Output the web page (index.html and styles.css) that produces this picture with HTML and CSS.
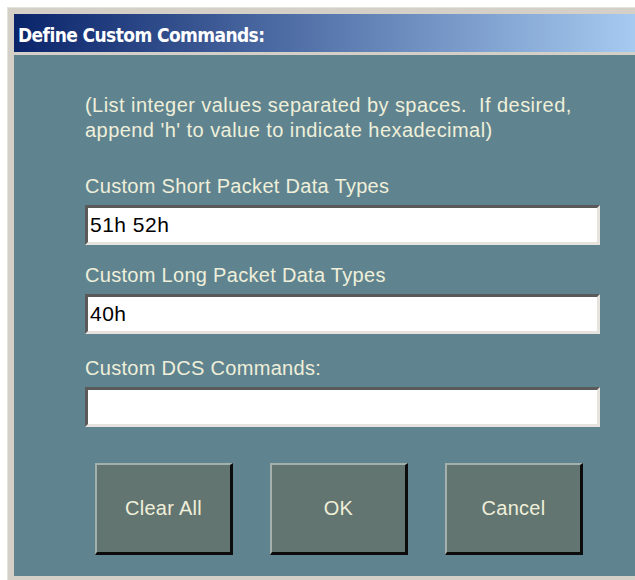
FILE: index.html
```html
<!DOCTYPE html>
<html>
<head>
<meta charset="utf-8">
<link rel="stylesheet" href="styles.css">
</head>
<body>
<div class="window">
  <div class="titlebar">Define Custom Commands:</div>
  <div class="sep"></div>
  <div class="content">
    <p class="hint">(List integer values separated by spaces.&nbsp; If desired,<br>append 'h' to value to indicate hexadecimal)</p>
    <label class="field-label">Custom Short Packet Data Types</label>
    <div class="field field-short"><span class="field-value">51h 52h</span></div>
    <label class="field-label">Custom Long Packet Data Types</label>
    <div class="field field-long"><span class="field-value">40h</span></div>
    <label class="field-label">Custom DCS Commands:</label>
    <div class="field field-dcs"><span class="field-value"></span></div>
    <div class="buttons">
      <div class="btn">Clear All</div>
      <div class="btn">OK</div>
      <div class="btn">Cancel</div>
    </div>
  </div>
</div>
</body>
</html>
```

FILE: styles.css
```css
html, body {
  margin: 0;
  padding: 0;
  background: #ffffff;
  width: 635px;
  height: 580px;
  overflow: hidden;
}

.window {
  margin: 7px 0 0 7px;
  height: 573px;
  box-sizing: border-box;
  background: #d4d0c8;
  border-left: 1px solid #e4e2dc;
  border-top: 1px solid #e4e2dc;
  padding: 6px 0 4px 6px;
  display: flex;
  flex-direction: column;
}

.titlebar {
  height: 32px;
  padding-top: 6px;
  flex: none;
  background: linear-gradient(to right, #0a246a, #a6caf0);
  color: #ffffff;
  font-family: "DejaVu Sans Condensed", "DejaVu Sans", sans-serif;
  font-weight: bold;
  font-size: 19px;
  letter-spacing: -0.6px;
  line-height: 31px;
  padding-left: 4px;
  white-space: nowrap;
}

.sep {
  height: 3px;
  flex: none;
  background: #d4d0c8;
}

.content {
  flex: 1;
  background: #5f848f;
  padding: 38px 0 0 71px;
  font-family: "Liberation Sans", Arial, sans-serif;
  font-size: 20px;
  letter-spacing: 0.3px;
  color: #efefda;
}

.hint {
  margin: 0 0 31px 0;
  line-height: 25px;
  letter-spacing: 0.45px;
  white-space: nowrap;
}

.field-label {
  display: block;
  line-height: 25px;
  margin-bottom: 6px;
}

.field {
  width: 515px;
  height: 40px;
  box-sizing: border-box;
  background: #ffffff;
  border-top: 3px solid #5a5a5a;
  border-left: 3px solid #5a5a5a;
  border-right: 3px solid #e6e3de;
  border-bottom: 3px solid #e6e3de;
  display: flex;
  align-items: center;
}

.field-short {
  margin-bottom: 18px;
}

.field-long {
  margin-bottom: 22px;
}

.field-value {
  color: #000000;
  font-size: 21px;
  letter-spacing: 0.5px;
  padding-left: 2px;
}

.buttons {
  display: flex;
  gap: 37px;
  margin: 36px 0 0 10px;
}

.btn {
  width: 138px;
  height: 92px;
  box-sizing: border-box;
  background: #637570;
  border-top: 2px solid #a3b0ac;
  border-left: 2px solid #a3b0ac;
  border-right: 3px solid #0c0c0c;
  border-bottom: 3px solid #0c0c0c;
  display: flex;
  align-items: center;
  justify-content: center;
  color: #efefda;
}
```
